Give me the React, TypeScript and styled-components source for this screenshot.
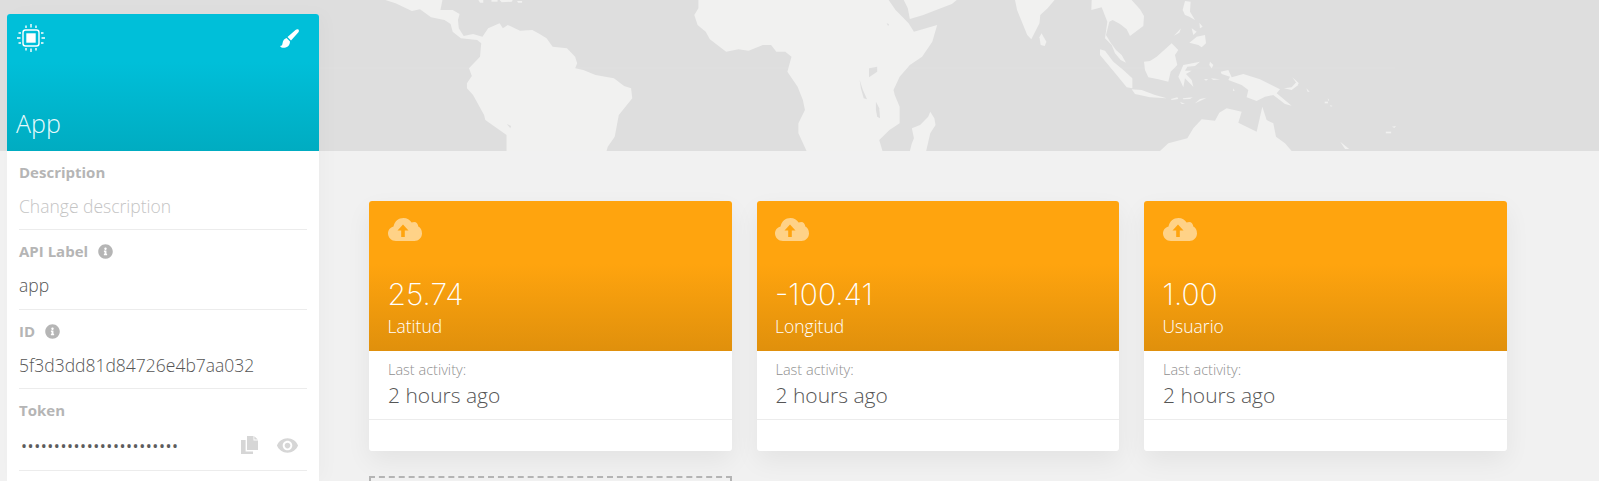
import React from 'react';
import styled, { createGlobalStyle } from 'styled-components';
import { FaInfoCircle } from 'react-icons/fa';
import { MdVisibility } from 'react-icons/md';

const GlobalStyle = createGlobalStyle`
    html, body {
        margin: 0;
        height: 481px;
        overflow: hidden;
        background: #f1f1f1;
        font-family: 'Open Sans', 'Liberation Sans', sans-serif;
    }
`;

const Page = styled.div`
    position: relative;
    display: flex;
    align-items: flex-start;
    height: 481px;
    overflow: hidden;
`;

const MapBand = styled.svg`
    position: absolute;
    top: 0;
    left: 0;
    width: 1599px;
    height: 151px;
    background: #dedede;
`;

const Sidebar = styled.aside`
    position: relative;
    flex: none;
    width: 312px;
    margin: 14px 0 0 7px;
    border-radius: 3px 3px 0 0;
    background: #fff;
    box-shadow: 6px 0 18px rgba(0, 0, 0, 0.025);
`;

const SidebarHead = styled.header`
    display: flex;
    flex-direction: column;
    justify-content: space-between;
    height: 137px;
    padding: 10px 16px 13px 9px;
    box-sizing: border-box;
    border-radius: 3px 3px 0 0;
    background: linear-gradient(180deg, #00bfd9 35%, #00acc1 100%);
    color: #fff;
`;

const HeadIcons = styled.div`
    display: flex;
    justify-content: space-between;
    align-items: flex-start;
    margin-left: 1px;

    > svg:last-child {
        margin-top: 5px;
        margin-right: 4px;
    }
`;

const AppName = styled.h1`
    margin: 0;
    font-size: 25px;
    font-weight: 300;
    line-height: 30px;
    color: #e9fbfd;
`;

const Fields = styled.div`
    padding: 0 12px;
    height: 330px;
`;

const Field = styled.div<{ $height: number; $top: number }>`
    height: ${(p) => p.$height}px;
    box-sizing: border-box;
    padding-top: ${(p) => p.$top}px;
    border-bottom: 1px solid #ececec;
`;

const FieldLabel = styled.div`
    display: flex;
    align-items: center;
    gap: 10px;
    height: 20px;
    font-size: 15px;
    font-weight: 700;
    color: #b5b5b5;
`;

const FieldValue = styled.div<{ $muted?: boolean }>`
    display: flex;
    align-items: center;
    justify-content: space-between;
    height: 24px;
    margin-top: 12px;
    font-size: 17.5px;
    font-weight: 300;
    color: ${(p) => (p.$muted ? '#c4c4c4' : '#555')};
`;

const Dots = styled.span`
    margin: 3px 0 0 2px;
    font-size: 16px;
    font-weight: 400;
    letter-spacing: 0.55px;
    color: #5c5c5c;
`;

const TokenActions = styled.div`
    display: flex;
    align-items: center;
    gap: 18px;
    margin: 2px 8px 0 0;
    color: #d6d6d6;
`;

const Main = styled.main`
    position: relative;
    display: flex;
    gap: 24.75px;
    padding: 201px 0 0 50px;
`;

const Column = styled.div`
    display: flex;
    flex-direction: column;
    gap: 25px;
    width: 362.75px;
`;

const Card = styled.section`
    height: 250px;
    border-radius: 3px;
    overflow: hidden;
    background: #fff;
    box-shadow: 0 10px 26px rgba(0, 0, 0, 0.06);
`;

const CardTop = styled.div`
    display: flex;
    flex-direction: column;
    height: 150px;
    box-sizing: border-box;
    padding: 17px 19px 0 18.5px;
    background: linear-gradient(180deg, #ffa40e 42%, #e0900c 100%);
    color: #fff;
`;

const CloudIcon = styled.svg`
    flex: none;
    width: 34px;
    height: 24px;
    fill: rgba(255, 255, 255, 0.5);
`;

const CardValue = styled.div`
    margin-top: 32px;
    font-family: Inter, 'Open Sans', sans-serif;
    font-size: 30px;
    font-weight: 200;
    line-height: 40px;
`;

const CardLabel = styled.div`
    margin-top: 1px;
    font-size: 17.5px;
    font-weight: 300;
    line-height: 22px;
`;

const CardBody = styled.div`
    height: 69px;
    box-sizing: border-box;
    padding: 10px 19px 0;
    border-bottom: 1px solid #ececec;
`;

const ActivityLabel = styled.div`
    font-size: 14.5px;
    font-weight: 300;
    line-height: 18px;
    color: #8f8f8f;
`;

const ActivityValue = styled.div`
    margin-top: 1px;
    font-size: 21px;
    font-weight: 300;
    line-height: 30px;
    color: #555;
`;

const AddCard = styled.div`
    height: 120px;
    border: 2px dashed #b4b4b4;
    box-sizing: border-box;
`;

const land: string[] = [
    '160,0 300,0 295,30 325,30 342,42 338,60 340,85 352,108 375,102 398,110 412,85 440,70 448,85 460,75 490,92 520,90 535,100 555,115 570,140 605,145 625,170 630,190 625,205 645,210 675,225 720,235 745,258 762,265 765,295 732,345 722,410 705,440 702,453 457,453 457,405 405,360 402,345 375,285 360,265 360,250 372,228 365,205 392,170 395,130 385,120 345,115 325,95 320,72 305,60 272,52 245,28 225,33 185,10',
    '388,0 400,0 400,8 392,8',
    '420,0 435,0 435,5 420,5',
    '440,0 472,0 470,5 445,7',
    '483,3 495,3 495,8 485,8',
    '927,0 1393,0 1410,30 1442,70 1455,95 1512,75 1500,125 1475,170 1445,195 1420,230 1405,270 1408,285 1420,320 1420,370 1395,390 1370,420 1378,453 1192,453 1172,400 1172,370 1188,330 1183,300 1170,260 1145,215 1155,170 1140,155 1118,155 1105,135 1085,135 1050,152 1025,148 995,155 955,118 945,95 925,75 917,45 927,25',
    '1430,0 1560,0 1548,12 1511,29 1478,45 1445,57 1440,25',
    '1495,335 1505,355 1508,375 1495,400 1485,453 1445,453 1450,430 1455,415 1450,385 1470,375 1490,350',
];

const lakes: string[] = [
    '1345,205 1365,200 1365,215 1345,232',
    '1322,240 1330,270 1340,298 1332,295 1325,265',
    '1362,305 1370,325 1372,355 1365,350 1362,330',
    '458,372 468,378 466,385',
    '1388,70 1394,72 1392,78',
];

const india: string[] = [
    '135,0 232,0 215,25 197,45 195,70 175,118 165,105 155,75 140,30',
    '200,100 212,125 208,138 198,135 195,112',
    '850,265 858,275 853,275',
    '895,305 903,305 903,310 895,310',
    '902,295 906,300 904,303',
    '908,315 914,318 910,320',
    '1045,395 1058,395 1058,400 1045,400',
    '1060,380 1070,378 1066,384',
    '933,425 955,447 945,447',
];

// 3x coordinates from x=1100
const pacific: string[] = [
    '-25,0 95,0 120,28 132,48 130,78 90,108 80,88 60,72 38,60 28,65 18,105 32,128 48,150 65,165 78,188 62,180 45,160 35,135 15,115 22,65 5,22 -26,30',
    '0,148 15,152 40,185 70,210 97,235 97,265 80,262 50,225 25,195 0,165',
    '95,268 125,270 165,285 200,295 150,292 105,282',
    '213,297 232,292 235,297 215,300',
    '248,295 278,292 270,297 250,298',
    '240,305 255,312 245,312',
    '285,310 300,297 320,293 300,303',
    '132,185 150,183 170,170 215,130 235,150 225,165 232,195 212,215 205,245 175,238 145,232 135,210',
    '250,195 300,185 285,198 262,200 255,212 275,212 258,222 275,240 280,260 265,245 255,235 250,262 240,240 235,230',
    '330,185 340,195 335,205 328,195',
    '255,3 272,5 270,35 285,60 268,50 255,45 248,30',
    '222,107 243,85 238,98',
    '298,68 308,80 300,85',
    '275,85 290,95 280,105',
    '290,110 315,105 318,130 305,142 295,135 268,128 285,115',
    '312,237 325,238 318,242',
    '333,235 360,238 340,240',
    '362,215 385,210 395,232 430,222 480,238 540,268 530,280 575,317 555,312 520,285 495,290 470,303 440,292 445,270 425,255 385,240 390,230 365,222',
    '552,265 575,262 590,245 595,255 575,270',
    '577,232 597,250 592,253',
    '400,265 404,273 399,273',
    '180,453 205,430 262,415 280,385 305,358 345,362 358,338 380,325 425,335 415,368 470,395 487,320 500,360 520,370 528,410 555,430 575,453',
];

const WorldMap = () => (
    <MapBand viewBox='0 0 1599 151'>
        <g transform='translate(320 0) scale(0.4082 0.3333)' fill='#f1f1f0'>
            {land.map((points) => <polygon key={points} points={points} />)}
            <g fill='#dedede'>
                {lakes.map((points) => <polygon key={points} points={points} />)}
            </g>
        </g>
        <g transform='translate(960 0) scale(0.4075 0.3333)' fill='#f1f1f0'>
            {india.map((points) => <polygon key={points} points={points} />)}
        </g>
        <g transform='translate(1100 0) scale(0.3333)' fill='#f1f1f0'>
            {pacific.map((points) => <polygon key={points} points={points} />)}
        </g>
        <line x1='320' y1='68' x2='1395' y2='68' stroke='#fff' strokeOpacity='0.12' />
    </MapBand>
);

const ChipIcon = () => (
    <svg width='28' height='28' viewBox='0 0 28 28' fill='none' stroke='#fff'>
        <rect x='6' y='6' width='16' height='16' rx='2.5' strokeWidth='1.4' />
        <rect x='9.3' y='9.3' width='9.4' height='9.4' fill='#fff' stroke='none' />
        <path
            strokeWidth='1.4'
            d='M9 1.5v2.5M14 0v3.5M19 1.5v2.5M9 24v2.5M14 24.5v3.5M19 24v2.5M1.5 9h2.5M0 14h3.5M1.5 19h2.5M24 9h2.5M24.5 14h3.5M24 19h2.5'
        />
    </svg>
);

const BrushIcon = () => (
    <svg width='19' height='19' viewBox='0 0 19 19' fill='#fff'>
        <path d='M18.4 .6C19.2 1.4 19 2.6 18.2 3.6L11 11.5L7.5 8L15.5 1C16.4 .2 17.6 -.2 18.4 .6Z' />
        <path d='M6.6 9L10 12.5C10 15.5 8 18.5 4.5 18.8C2.5 19 .8 18.4 0 17C1.5 17 2.2 16.3 2.5 14.5C2.8 11.5 4.5 9.6 6.6 9Z' />
    </svg>
);

const CopyIcon = () => (
    <svg width='17' height='18' viewBox='0 0 17 18' fill='currentColor'>
        <path d='M6 0h6.5v4.5H17V14H6z' />
        <path d='M13.3 0.3l3.5 3.2H13.3z' />
        <path d='M0 4h4.6v11.4H12V18H0z' />
    </svg>
);

const CloudUpload = () => (
    <CloudIcon viewBox='0 0 34 24'>
        <path
            fillRule='evenodd'
            d='M8 23C3.5 23 0 19.5 0 15.5C0 12 2.2 9.3 5.5 8.4C6.5 3.5 10.5 0 15.5 0C19 0 22 1.8 23.6 4.6C24.5 4.2 25.3 4 26.2 4C28.5 4 30 5.8 30.3 8.5C32.5 9.5 34 12 34 15.5C34 19.8 30.5 23 26.5 23ZM15 6.5L9.5 12.5H13.2V19H16.8V12.5H20.5Z'
        />
    </CloudIcon>
);

const variables = [
    { value: '25.74', label: 'Latitud' },
    { value: '-100.41', label: 'Longitud' },
    { value: '1.00', label: 'Usuario' },
];

const App = () => (
    <Page>
        <GlobalStyle />
        <WorldMap />
        <Sidebar>
            <SidebarHead>
                <HeadIcons>
                    <ChipIcon />
                    <BrushIcon />
                </HeadIcons>
                <AppName>App</AppName>
            </SidebarHead>
            <Fields>
                <Field $height={79} $top={11}>
                    <FieldLabel>Description</FieldLabel>
                    <FieldValue $muted>Change description</FieldValue>
                </Field>
                <Field $height={80} $top={11}>
                    <FieldLabel>
                        API Label
                        <FaInfoCircle size={15} />
                    </FieldLabel>
                    <FieldValue>app</FieldValue>
                </Field>
                <Field $height={79} $top={11}>
                    <FieldLabel>
                        ID
                        <FaInfoCircle size={15} />
                    </FieldLabel>
                    <FieldValue>5f3d3dd81d84726e4b7aa032</FieldValue>
                </Field>
                <Field $height={82} $top={11}>
                    <FieldLabel>Token</FieldLabel>
                    <FieldValue>
                        <Dots>{'•'.repeat(24)}</Dots>
                        <TokenActions>
                            <CopyIcon />
                            <MdVisibility size={23} />
                        </TokenActions>
                    </FieldValue>
                </Field>
            </Fields>
        </Sidebar>
        <Main>
            {variables.map((v, i) => (
                <Column key={v.label}>
                    <Card>
                        <CardTop>
                            <CloudUpload />
                            <CardValue>{v.value}</CardValue>
                            <CardLabel>{v.label}</CardLabel>
                        </CardTop>
                        <CardBody>
                            <ActivityLabel>Last activity:</ActivityLabel>
                            <ActivityValue>2 hours ago</ActivityValue>
                        </CardBody>
                    </Card>
                    {i === 0 && <AddCard />}
                </Column>
            ))}
        </Main>
    </Page>
);

export default App;
